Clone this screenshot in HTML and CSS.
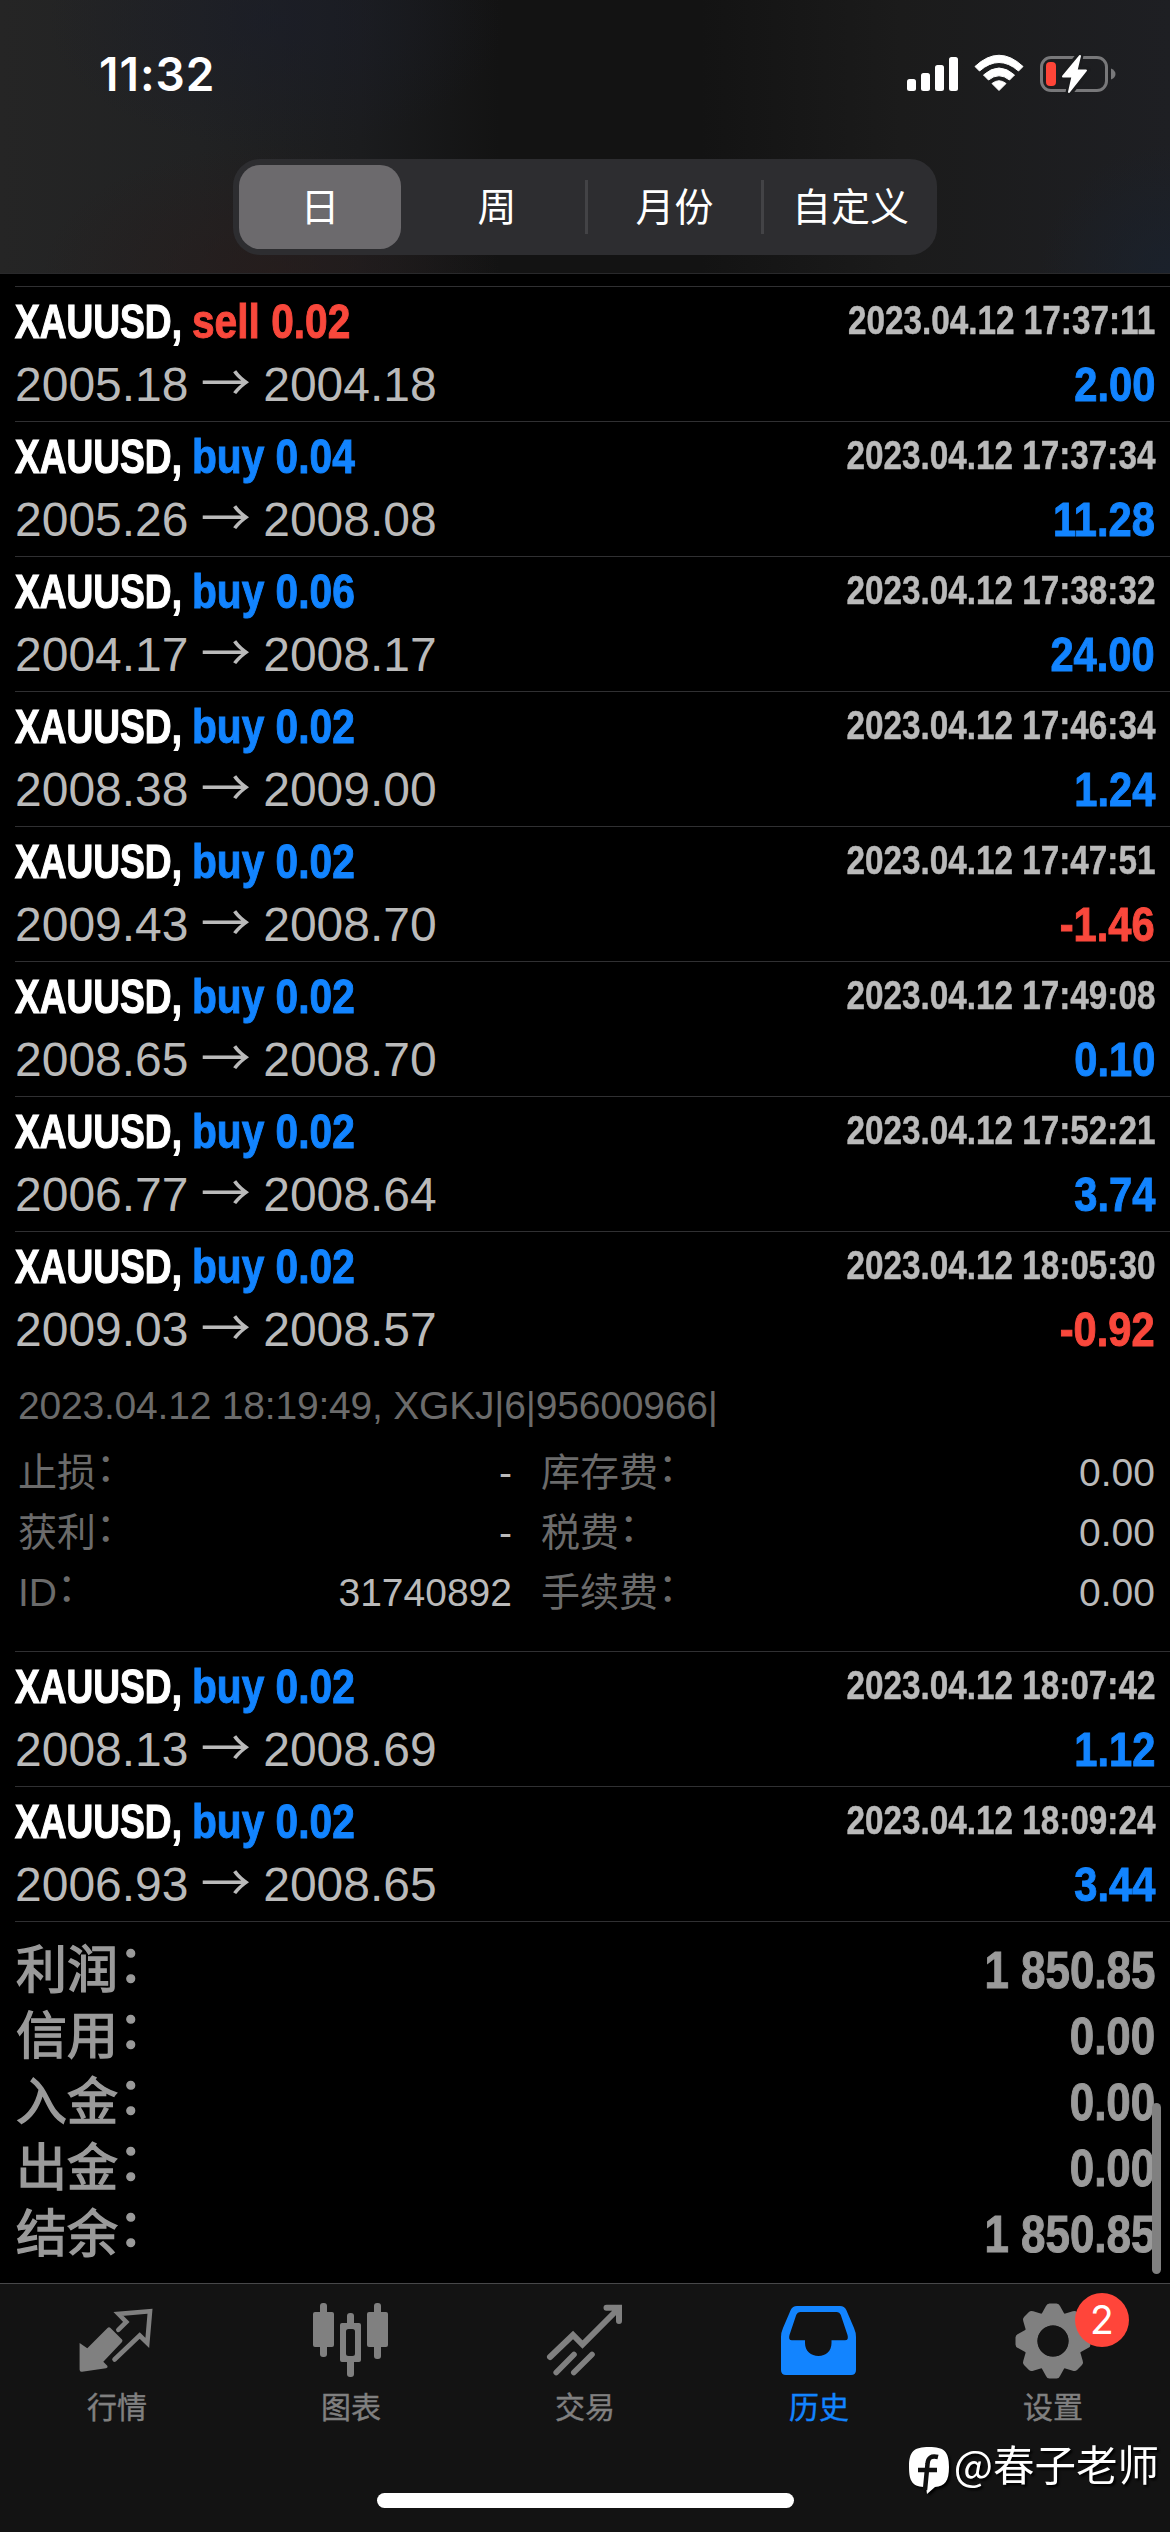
FILE: index.html
```html
<!DOCTYPE html>
<html lang="zh-CN">
<head>
<meta charset="utf-8">
<title>历史</title>
<link rel="stylesheet" href="styles.css">
</head>
<body>
<div class="screen">
  <header class="header">
    <div class="status">
      <div class="time">11:32</div>
      <svg class="status-icons" width="210" height="44" viewBox="907 52 210 44">
        <g fill="#fff">
          <rect x="907" y="79" width="9" height="12" rx="2.5"/>
          <rect x="921" y="73" width="9" height="18" rx="2.5"/>
          <rect x="935" y="65" width="9" height="26" rx="2.5"/>
          <rect x="949" y="57" width="9" height="34" rx="2.5"/>
          <path d="M975 66.500Q999 44 1023 66.500L1018.500 71Q999 54 979.500 71Z" stroke="#fff" stroke-width="1" stroke-linejoin="round"/>
          <path d="M983.500 75Q999 61 1014.500 75L1009.500 80Q999 71.500 988.500 80Z" stroke="#fff" stroke-width="1" stroke-linejoin="round"/>
          <path d="M992 83.500Q999 78 1006 83.500L999 90.500Z" stroke="#fff" stroke-width="1" stroke-linejoin="round"/>
        </g>
        <rect x="1041.500" y="57.500" width="65" height="33" rx="9.500" fill="none" stroke="#78787a" stroke-width="3"/>
        <path d="M1111 68.500Q1115.500 70.500 1115.500 74T1111 79.500Z" fill="#78787a"/>
        <rect x="1046" y="62" width="10" height="24" rx="4" fill="#ff4538"/>
        <path d="M1080 55L1062 77L1072 77L1069 93L1087 70L1077 70Z" fill="#fff" stroke="#1b1c1e" stroke-width="7" stroke-linejoin="round"/>
        <path d="M1080 56L1063 76.500L1072.500 76.500L1069 92L1086 70.500L1076.500 70.500Z" fill="#fff" stroke="#fff" stroke-width="2" stroke-linejoin="round"/>
      </svg>
    </div>
    <div class="segments">
      <div class="segment selected">日</div>
      <div class="segment">周</div>
      <div class="segment divided">月份</div>
      <div class="segment divided">自定义</div>
    </div>
  </header>

  <main class="history">
    <div class="deal">
      <div class="line title"><b class="symbol">XAUUSD,</b><b class="side sell">sell 0.02</b><b class="date">2023.04.12 17:37:11</b></div>
      <div class="line prices"><span>2005.18 <span class="arrow">→</span> 2004.18</span><b class="profit">2.00</b></div>
    </div>
    <div class="deal">
      <div class="line title"><b class="symbol">XAUUSD,</b><b class="side">buy 0.04</b><b class="date">2023.04.12 17:37:34</b></div>
      <div class="line prices"><span>2005.26 <span class="arrow">→</span> 2008.08</span><b class="profit">11.28</b></div>
    </div>
    <div class="deal">
      <div class="line title"><b class="symbol">XAUUSD,</b><b class="side">buy 0.06</b><b class="date">2023.04.12 17:38:32</b></div>
      <div class="line prices"><span>2004.17 <span class="arrow">→</span> 2008.17</span><b class="profit">24.00</b></div>
    </div>
    <div class="deal">
      <div class="line title"><b class="symbol">XAUUSD,</b><b class="side">buy 0.02</b><b class="date">2023.04.12 17:46:34</b></div>
      <div class="line prices"><span>2008.38 <span class="arrow">→</span> 2009.00</span><b class="profit">1.24</b></div>
    </div>
    <div class="deal">
      <div class="line title"><b class="symbol">XAUUSD,</b><b class="side">buy 0.02</b><b class="date">2023.04.12 17:47:51</b></div>
      <div class="line prices"><span>2009.43 <span class="arrow">→</span> 2008.70</span><b class="profit loss">-1.46</b></div>
    </div>
    <div class="deal">
      <div class="line title"><b class="symbol">XAUUSD,</b><b class="side">buy 0.02</b><b class="date">2023.04.12 17:49:08</b></div>
      <div class="line prices"><span>2008.65 <span class="arrow">→</span> 2008.70</span><b class="profit">0.10</b></div>
    </div>
    <div class="deal">
      <div class="line title"><b class="symbol">XAUUSD,</b><b class="side">buy 0.02</b><b class="date">2023.04.12 17:52:21</b></div>
      <div class="line prices"><span>2006.77 <span class="arrow">→</span> 2008.64</span><b class="profit">3.74</b></div>
    </div>
    <div class="deal expanded">
      <div class="line title"><b class="symbol">XAUUSD,</b><b class="side">buy 0.02</b><b class="date">2023.04.12 18:05:30</b></div>
      <div class="line prices"><span>2009.03 <span class="arrow">→</span> 2008.57</span><b class="profit loss">-0.92</b></div>
      <div class="details">
        <div class="comment">2023.04.12 18:19:49, XGKJ|6|95600966|</div>
        <div class="fields">
          <div class="field"><span>止损<span class="colon">：</span></span><span class="value">-</span></div>
          <div class="field"><span>库存费<span class="colon">：</span></span><span class="value">0.00</span></div>
          <div class="field"><span>获利<span class="colon">：</span></span><span class="value">-</span></div>
          <div class="field"><span>税费<span class="colon">：</span></span><span class="value">0.00</span></div>
          <div class="field"><span>ID<span class="colon">：</span></span><span class="value">31740892</span></div>
          <div class="field"><span>手续费<span class="colon">：</span></span><span class="value">0.00</span></div>
        </div>
      </div>
    </div>
    <div class="deal">
      <div class="line title"><b class="symbol">XAUUSD,</b><b class="side">buy 0.02</b><b class="date">2023.04.12 18:07:42</b></div>
      <div class="line prices"><span>2008.13 <span class="arrow">→</span> 2008.69</span><b class="profit">1.12</b></div>
    </div>
    <div class="deal">
      <div class="line title"><b class="symbol">XAUUSD,</b><b class="side">buy 0.02</b><b class="date">2023.04.12 18:09:24</b></div>
      <div class="line prices"><span>2006.93 <span class="arrow">→</span> 2008.65</span><b class="profit">3.44</b></div>
    </div>
    <div class="summary">
      <div class="total"><span class="name">利润<span class="colon">：</span></span><b class="amount">1 850.85</b></div>
      <div class="total"><span class="name">信用<span class="colon">：</span></span><b class="amount">0.00</b></div>
      <div class="total"><span class="name">入金<span class="colon">：</span></span><b class="amount">0.00</b></div>
      <div class="total"><span class="name">出金<span class="colon">：</span></span><b class="amount">0.00</b></div>
      <div class="total"><span class="name">结余<span class="colon">：</span></span><b class="amount">1 850.85</b></div>
    </div>
    <div class="scrollbar"></div>
  </main>

  <nav class="tabs">
    <div class="tab">
      <svg width="80" height="80" viewBox="0 0 80 80">
        <path d="M2.600 42L10.300 47.300L30.500 27Q32 25.500 33.500 27L45 38.500Q46 39.700 45 41L26.300 60.700L30.500 65Q31 67 29 67.300L5 70.700Q2.600 71 2.600 68.500Z" fill="#808080"/>
        <path d="M41.300 28.800L49.300 21L41.500 13L73 10.300L70.300 42L62.700 34.500L37.500 58.500" fill="none" stroke="#808080" stroke-width="4.600" stroke-linecap="round"/>
      </svg>
      <span>行情</span>
    </div>
    <div class="tab">
      <svg width="80" height="80" viewBox="0 0 80 80" fill="#808080">
        <rect x="9" y="2" width="7" height="54" rx="3"/><rect x="2" y="11" width="21" height="35" rx="2"/>
        <rect x="63" y="2" width="7" height="56" rx="3"/><rect x="56" y="11" width="21" height="35" rx="2"/>
        <rect x="36" y="12" width="7" height="14" rx="3"/><rect x="36" y="57" width="7" height="19" rx="3"/>
        <path fill-rule="evenodd" d="M31 22H48Q50 22 50 24V59Q50 61 48 61H31Q29 61 29 59V24Q29 22 31 22ZM37.500 28Q35 28 35 30.500V52.500Q35 55 37.500 55H41.500Q44 55 44 52.500V30.500Q44 28 41.500 28Z"/>
      </svg>
      <span>图表</span>
    </div>
    <div class="tab">
      <svg width="80" height="80" viewBox="0 0 80 80" fill="none" stroke="#808080" stroke-width="6" stroke-linecap="round">
        <path d="M5 56L28 34L37.500 43.500L73 8M61.500 6.800H74V20"/>
        <path d="M11.200 71.500L29 53.500M28.800 71.500L47 53.500" stroke-width="5.600"/>
      </svg>
      <span>交易</span>
    </div>
    <div class="tab active">
      <svg width="80" height="80" viewBox="0 0 80 80" fill="#1284ff">
        <path fill-rule="evenodd" d="M18 5H61Q65.500 5 67.300 9L75 27Q77 31.500 77 36V69Q77 74 72 74H7Q2 74 2 69V36Q2 31.500 4 27L11.700 9Q13.500 5 18 5ZM21.500 11Q18.500 11 17.200 14L10.500 34Q9 39.300 13 39.300H26V42C26 50 32 55 39.500 55S52.500 50 52.500 42V39.300H66Q70 39.300 68.500 34L61.800 14Q60.500 11 57.500 11Z"/>
      </svg>
      <span>历史</span>
    </div>
    <div class="tab">
      <svg width="80" height="80" viewBox="-40 -40 80 80" fill="#808080">
        <defs><path id="tooth" d="M-12 -26L-7 -35Q-6 -37.500 -3.500 -37.500H3.500Q6 -37.500 7 -35L12 -26Z"/></defs>
        <use href="#tooth"/><use href="#tooth" transform="rotate(45)"/><use href="#tooth" transform="rotate(90)"/><use href="#tooth" transform="rotate(135)"/><use href="#tooth" transform="rotate(180)"/><use href="#tooth" transform="rotate(225)"/><use href="#tooth" transform="rotate(270)"/><use href="#tooth" transform="rotate(315)"/>
        <circle r="22.500" fill="none" stroke="#808080" stroke-width="14"/>
        <circle r="15.500" fill="#131313"/>
      </svg>
      <span>设置</span>
      <em class="badge">2</em>
    </div>
  </nav>
  <div class="home-bar"></div>
  <div class="watermark">
    <svg width="44" height="50" viewBox="0 0 44 50">
      <path d="M21 1C36 1 41 5 41 21C41 35 37 40 27 41L19 48L18 41C5 41 1 36 1 21C1 5 6 1 21 1Z" fill="#fff"/>
      <path d="M30 11Q20 8.500 19.500 18L17 44M10 24H29" fill="none" stroke="#111" stroke-width="4.500"/>
    </svg>
    <span>@春子老师</span>
  </div>
</div>
</body>
</html>
```
FILE: styles.css
```css
* { box-sizing: border-box; }

body {
  margin: 0;
  background: #000;
  font-family: "Liberation Sans", "Noto Sans CJK SC", sans-serif;
  color: #fff;
}

.screen {
  position: relative;
  display: flex;
  flex-direction: column;
  width: 1170px;
  height: 2532px;
  overflow: hidden;
}

.header {
  height: 274px;
  flex: none;
  border-bottom: 1px solid #29292b;
  background:
    radial-gradient(ellipse 230px 130px at 275px 20px, rgba(26, 29, 42, 0.6), transparent),
    radial-gradient(ellipse 230px 130px at 270px 274px, rgba(40, 28, 27, 0.7), transparent),
    radial-gradient(ellipse 130px 130px at 1170px 274px, rgba(25, 34, 47, 0.7), transparent),
    linear-gradient(90deg, #252525 0, #212223 200px, #1b1c1e 360px, #131313 500px, #131313 700px, #1b1b1b 900px, #1e1f23 1170px);
}

.status {
  display: flex;
  justify-content: space-between;
  height: 159px;
  padding: 52px 53px 0 99px;
}

.time {
  margin-top: -1px;
  font: 600 46px/46px Inter, sans-serif;
  letter-spacing: 1px;
}

.segments {
  display: grid;
  grid-template-columns: repeat(4, 176px);
  width: 704px;
  height: 96px;
  margin: 0 auto;
  border-radius: 27px;
  background: #2d2d30;
}

.segment {
  display: flex;
  align-items: center;
  justify-content: center;
  padding-bottom: 5px;
  font: 400 39px/49px "Noto Sans CJK SC", sans-serif;
}

.selected {
  margin: 6px 8px 6px 6px;
  border-radius: 21px;
  background: #6c6a6d;
}

.divided {
  height: 54px;
  align-self: center;
  border-left: 3px solid #434346;
}

.history {
  position: relative;
  flex: 1;
  padding: 12px 0 0 15px;
}

.deal {
  height: 135px;
  padding: 4px 15px 0 0;
  border-top: 1px solid #303032;
}

.expanded { height: 420px; }

.line {
  display: flex;
  white-space: nowrap;
}

.title {
  height: 60px;
  font-size: 49px;
  line-height: 60px;
}

.symbol {
  width: 177px;
  transform: scaleX(0.757);
  transform-origin: left;
  -webkit-text-stroke: 1.2px;
}

.side {
  transform: scaleX(0.83);
  transform-origin: left;
  color: #1284ff;
  -webkit-text-stroke: 1px;
}

.sell, .loss { color: #f9483c; }

.date {
  margin-left: auto;
  font-size: 40px;
  line-height: 58px;
  color: #bababa;
  transform: scaleX(0.832);
  transform-origin: right;
  -webkit-text-stroke: 0.5px;
}

.prices {
  justify-content: space-between;
  font-size: 48px;
  line-height: 67px;
  color: #bababa;
}

.arrow {
  margin: 0 -1px;
  font-family: "Noto Sans CJK SC", sans-serif;
  font-size: 50px;
  line-height: 0;
}

.profit {
  font-size: 49px;
  transform: scaleX(0.85);
  transform-origin: right;
  color: #1284ff;
  -webkit-text-stroke: 1px;
}

.profit.loss { color: #f9483c; }

.details {
  padding: 10px 0 0 3px;
  font-size: 39px;
  color: #6b6b6b;
}

.comment {
  height: 70px;
  line-height: 66px;
  letter-spacing: -0.2px;
}

.fields {
  display: grid;
  grid-template-columns: 494px 614px;
  column-gap: 29px;
}

.field {
  display: flex;
  justify-content: space-between;
  height: 60px;
  line-height: 60px;
}

.value { color: #bababa; }

.colon {
  line-height: 0;
  vertical-align: 0.12em;
}

.summary {
  height: 362px;
  padding: 16px 15px 0 1px;
  border-top: 1px solid #303032;
  color: #9a9a9a;
}

.total {
  display: flex;
  justify-content: space-between;
  height: 66px;
  line-height: 66px;
}

.name {
  font-size: 51px;
  -webkit-text-stroke: 1.4px;
}

.amount {
  font-size: 52px;
  line-height: 64px;
  transform: scaleX(0.845);
  transform-origin: right;
  -webkit-text-stroke: 1px;
}

.scrollbar {
  position: absolute;
  right: 9px;
  top: 1829px;
  width: 9px;
  height: 171px;
  border-radius: 5px;
  background: #808080;
}

.tabs {
  display: grid;
  grid-template-columns: repeat(5, 1fr);
  flex: none;
  height: 250px;
  padding-top: 17px;
  border-top: 1px solid #48484a;
  background: #131313;
}

.tab {
  position: relative;
  display: flex;
  flex-direction: column;
  align-items: center;
  color: #808080;
  font: 400 30px/40px "Noto Sans CJK SC", sans-serif;
}

.tab span {
  margin-top: 4px;
  -webkit-text-stroke: 0.4px;
}

.active { color: #1284ff; }

.badge {
  position: absolute;
  left: 139px;
  top: -8px;
  width: 54px;
  height: 54px;
  border-radius: 50%;
  background: #ff453a;
  color: #fff;
  font: 400 39px/54px Inter, sans-serif;
  text-align: center;
}

.home-bar {
  position: absolute;
  left: 377px;
  top: 2493px;
  width: 417px;
  height: 15px;
  border-radius: 8px;
  background: #fff;
}

.watermark {
  position: absolute;
  right: 11px;
  top: 2446px;
  display: flex;
  gap: 2px;
  filter: drop-shadow(2px 2px 1px #000);
  font: 400 41.500px/34px "Noto Sans CJK SC", sans-serif;
}
```
